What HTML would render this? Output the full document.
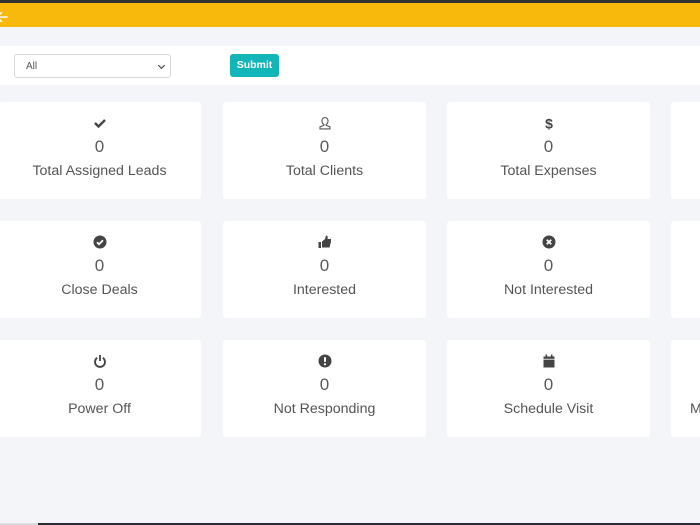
<!DOCTYPE html>
<html><head><meta charset="utf-8"><style>
*{margin:0;padding:0;box-sizing:border-box}
body{width:700px;height:525px;background:#f4f5f9;position:relative;overflow:hidden;font-family:"Liberation Sans",sans-serif;color:#555}
.top{position:absolute;left:0;top:0;width:700px;height:3px;background:#333}
.yel{position:absolute;left:0;top:3px;width:700px;height:24px;background:#f9b90c}
.arr{position:absolute;left:-4px;top:4px;color:#fff;font-size:15px;font-weight:bold;font-family:"DejaVu Sans",sans-serif}
.filt{position:absolute;left:0;top:46px;width:700px;height:39px;background:#fff}
.sel{position:absolute;left:14px;top:54px;width:157px;height:24px;border:1px solid #d5d7dc;border-radius:3px;background:#fff;font-size:10px;color:#555;padding:6px 11px}
.sel:after{content:"";position:absolute;right:6px;top:8px;width:4px;height:4px;border-right:1.5px solid #333;border-bottom:1.5px solid #333;transform:rotate(45deg)}
.btn{position:absolute;left:230px;top:54px;width:49px;height:23px;background:#12b5b8;border-radius:3px;color:#fff;font-size:10.5px;font-weight:bold;text-align:center;line-height:23px}
.card{position:absolute;width:203px;height:97px;background:#fff;border-radius:3px;text-align:center}
.card svg{position:absolute;left:50%;top:14px;margin-left:-7px}
.n{position:absolute;left:0;right:0;top:35px;font-size:17px;color:#5a5a5a}
.l{position:absolute;left:0;right:0;top:61px;font-size:14.2px;color:#555;white-space:nowrap}
.bot{position:absolute;left:0;top:523px;width:700px;height:2px;background:#262c36}
.bot2{position:absolute;left:0;top:523px;width:38px;height:2px;background:#ddd}
</style></head><body>
<div class="top"></div><div class="yel"><span class="arr">&#129120;</span></div>
<div class="filt"></div>
<div class="sel">All</div>
<div class="btn">Submit</div>

<div class="card" style="left:-2px;top:102px"><svg width="14" height="14" viewBox="0 0 14 14"><path d="M2 7l3.5 3.5L12 4" stroke="#444" stroke-width="2.4" fill="none"/></svg><div class="n">0</div><div class="l">Total Assigned Leads</div></div>
<div class="card" style="left:223px;top:102px"><svg width="14" height="14" viewBox="0 0 14 14"><path d="M7 1.5a3 3 0 0 1 3 3.2c0 2-1.2 3.4-1.9 3.8v.8l3.9 1.6v2H2v-2l3.9-1.6v-.8C5.2 8.1 4 6.7 4 4.7A3 3 0 0 1 7 1.5z" stroke="#555" stroke-width="1.1" fill="none"/></svg><div class="n">0</div><div class="l">Total Clients</div></div>
<div class="card" style="left:447px;top:102px"><svg width="14" height="14" viewBox="0 0 14 14"><text x="7" y="12.5" text-anchor="middle" font-family="Liberation Sans" font-weight="bold" font-size="14" fill="#444">$</text></svg><div class="n">0</div><div class="l">Total Expenses</div></div>
<div class="card" style="left:671px;top:102px"></div>

<div class="card" style="left:-2px;top:221px"><svg width="14" height="14" viewBox="0 0 14 14"><circle cx="7" cy="7" r="6.5" fill="#444"/><path d="M4 7.2l2 2 4-4" stroke="#fff" stroke-width="1.8" fill="none"/></svg><div class="n">0</div><div class="l">Close Deals</div></div>
<div class="card" style="left:223px;top:221px"><svg width="14" height="14" viewBox="0 0 14 14"><rect x="0.5" y="7" width="2.5" height="6" fill="#444"/><path d="M4 6.5L7 4l1-3.5c1.5 0 2 1 1.5 3.5H13v2.5l-1.5 6H4z" fill="#444"/></svg><div class="n">0</div><div class="l">Interested</div></div>
<div class="card" style="left:447px;top:221px"><svg width="14" height="14" viewBox="0 0 14 14"><circle cx="7" cy="7" r="6.5" fill="#444"/><path d="M4.8 4.8l4.4 4.4M9.2 4.8l-4.4 4.4" stroke="#fff" stroke-width="1.8"/></svg><div class="n">0</div><div class="l">Not Interested</div></div>
<div class="card" style="left:671px;top:221px"></div>

<div class="card" style="left:-2px;top:340px"><svg width="14" height="14" viewBox="0 0 14 14"><path d="M4.2 3.8A5 5 0 1 0 9.8 3.8" stroke="#444" stroke-width="1.8" fill="none"/><path d="M7 1v6" stroke="#444" stroke-width="1.8"/></svg><div class="n">0</div><div class="l">Power Off</div></div>
<div class="card" style="left:223px;top:340px"><svg width="14" height="14" viewBox="0 0 14 14"><circle cx="7" cy="7" r="6.5" fill="#444"/><path d="M7 3.2v4.6" stroke="#fff" stroke-width="2"/><circle cx="7" cy="10.2" r="1.1" fill="#fff"/></svg><div class="n">0</div><div class="l">Not Responding</div></div>
<div class="card" style="left:447px;top:340px"><svg width="14" height="14" viewBox="0 0 14 14"><rect x="1.5" y="2.5" width="11" height="11" fill="#444"/><rect x="3.5" y="0.5" width="1.6" height="3" fill="#444"/><rect x="8.9" y="0.5" width="1.6" height="3" fill="#444"/><rect x="1.5" y="4.8" width="11" height="0.8" fill="#fff"/></svg><div class="n">0</div><div class="l">Schedule Visit</div></div>
<div class="card" style="left:671px;top:340px"><div class="l" style="left:19px;text-align:left">M</div></div>

<div class="bot"></div><div class="bot2"></div>
</body></html>
